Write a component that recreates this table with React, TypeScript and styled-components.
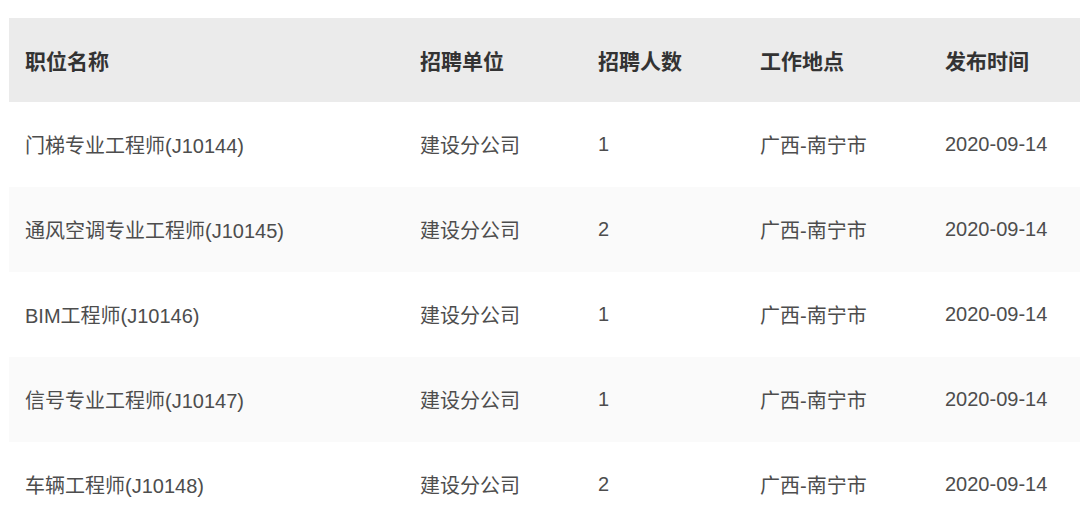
import React, { FC } from 'react';
import styled, { createGlobalStyle } from 'styled-components';

const GlobalStyle = createGlobalStyle`
  html, body {
    margin: 0;
    padding: 0;
    background: #ffffff;
  }
  body {
    font-family: "Liberation Sans", "Noto Sans CJK SC", sans-serif;
  }
`;

const Page = styled.div`
  padding: 18px 0 0 9px;
  box-sizing: border-box;
  width: 1080px;
`;

const Table = styled.div`
  display: flex;
  flex-direction: column;
`;

const Row = styled.div<{ $shade?: string; $height: number }>`
  display: grid;
  grid-template-columns: 395px 178px 162px 185px 1fr;
  align-items: center;
  height: ${p => p.$height}px;
  background: ${p => p.$shade || '#ffffff'};
`;

const HeadCell = styled.div`
  padding-left: 16px;
  font-size: 21px;
  font-weight: 700;
  color: #333333;
  white-space: nowrap;
`;

const Cell = styled.div`
  padding-left: 16px;
  font-size: 20px;
  color: #4d4d4d;
  white-space: nowrap;
`;

const headers = ['职位名称', '招聘单位', '招聘人数', '工作地点', '发布时间'];

const jobs = [
  ['门梯专业工程师(J10144)', '建设分公司', '1', '广西-南宁市', '2020-09-14'],
  ['通风空调专业工程师(J10145)', '建设分公司', '2', '广西-南宁市', '2020-09-14'],
  ['BIM工程师(J10146)', '建设分公司', '1', '广西-南宁市', '2020-09-14'],
  ['信号专业工程师(J10147)', '建设分公司', '1', '广西-南宁市', '2020-09-14'],
  ['车辆工程师(J10148)', '建设分公司', '2', '广西-南宁市', '2020-09-14'],
];

const App: FC = () => {
  return (
    <Page>
      <GlobalStyle />
      <Table>
        <Row $shade="#ebebeb" $height={84}>
          {headers.map(h => (
            <HeadCell key={h}>{h}</HeadCell>
          ))}
        </Row>
        {jobs.map((job, i) => (
          <Row key={job[0]} $height={85} $shade={i % 2 === 1 ? '#fafafa' : undefined}>
            {job.map((v, j) => (
              <Cell key={j}>{v}</Cell>
            ))}
          </Row>
        ))}
      </Table>
    </Page>
  );
};

export default App;
